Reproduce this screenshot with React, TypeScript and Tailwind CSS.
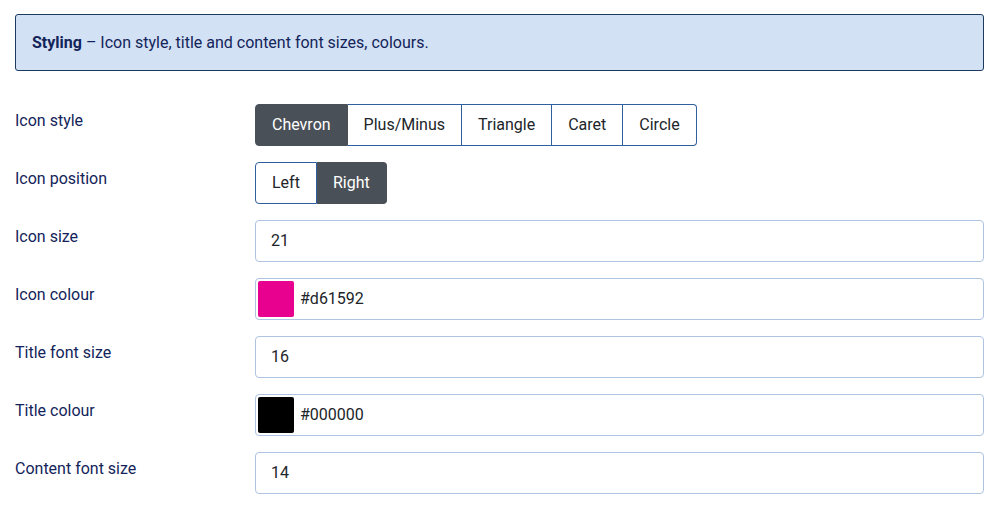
import React from "react";

const font = { fontFamily: "Roboto, 'Liberation Sans', sans-serif" };

function Group({ items, active }: { items: string[]; active: string }) {
  return (
    <div className="flex h-[42px]">
      {items.map((it, i) => {
        const isActive = it === active;
        const first = i === 0;
        const last = i === items.length - 1;
        return (
          <div
            key={it}
            className={
              "flex items-center justify-center px-4 text-[16px] border-y border-[#2f5f9c] " +
              (first ? "border-l rounded-l-[4px] " : "") +
              (last ? "border-r rounded-r-[4px] " : "border-r ") +
              (isActive ? "bg-[#4a5058] text-white border-[#4a5058]" : "bg-white text-[#212529]")
            }
          >
            {it}
          </div>
        );
      })}
    </div>
  );
}

function Input({ value, swatch }: { value: string; swatch?: string }) {
  return (
    <div className="flex h-[42px] items-center rounded-[4px] border border-[#aec4e2] bg-white text-[16px] text-[#212529]">
      {swatch ? (
        <>
          <div className="ml-[2px] h-[36px] w-[36px] rounded-[2px]" style={{ background: swatch }} />
          <span className="ml-[6px]">{value}</span>
        </>
      ) : (
        <span className="pl-[15px]">{value}</span>
      )}
    </div>
  );
}

function Row({ label, children }: { label: string; children: React.ReactNode }) {
  return (
    <div className="flex">
      <div className="w-[240px] shrink-0 pt-[6px] text-[16px] leading-[22px] text-[#13245a]">{label}</div>
      <div className="flex-1">{children}</div>
    </div>
  );
}

export default function App() {
  return (
    <div className="min-h-[510px] bg-white pl-[15px] pr-[11px] pt-[14px]" style={font}>
      <div className="flex h-[57px] items-center rounded-[3px] border border-[#1c3a5e] bg-[#d2e1f3] px-4 text-[16px] text-[#13245a]">
        <span>
          <b className="font-bold">Styling</b> – Icon style, title and content font sizes, colours.
        </span>
      </div>
      <div className="mt-[33px] flex flex-col gap-4">
        <Row label="Icon style">
          <div className="flex">
            <Group items={["Chevron", "Plus/Minus", "Triangle", "Caret", "Circle"]} active="Chevron" />
          </div>
        </Row>
        <Row label="Icon position">
          <div className="flex">
            <Group items={["Left", "Right"]} active="Right" />
          </div>
        </Row>
        <Row label="Icon size">
          <Input value="21" />
        </Row>
        <Row label="Icon colour">
          <Input value="#d61592" swatch="#e8008f" />
        </Row>
        <Row label="Title font size">
          <Input value="16" />
        </Row>
        <Row label="Title colour">
          <Input value="#000000" swatch="#000000" />
        </Row>
        <Row label="Content font size">
          <Input value="14" />
        </Row>
      </div>
    </div>
  );
}
